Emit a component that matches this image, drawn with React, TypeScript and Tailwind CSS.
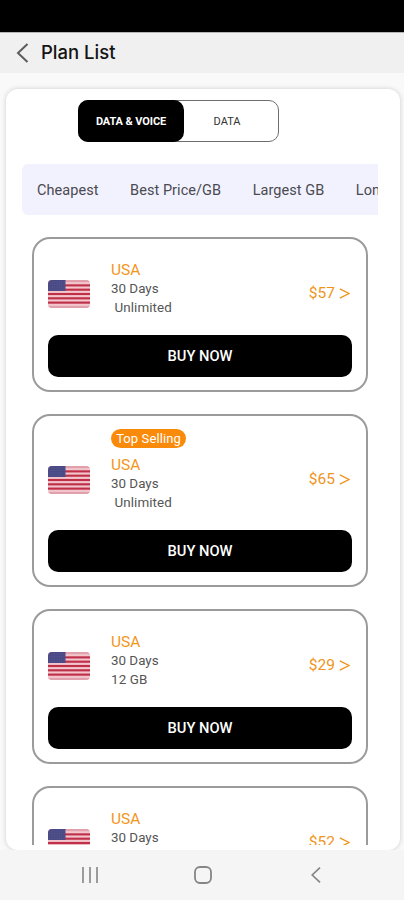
import React from 'react'

type Plan = {
  id: number
  country: string
  days: string
  amount: string
  price: string
  top?: boolean
}

const FILTERS = ['Cheapest', 'Best Price/GB', 'Largest GB', 'Longest']

const PLANS: Plan[] = [
  { id: 1, country: 'USA', days: '30 Days', amount: '\u00a0Unlimited', price: '$57' },
  { id: 2, country: 'USA', days: '30 Days', amount: '\u00a0Unlimited', price: '$65', top: true },
  { id: 3, country: 'USA', days: '30 Days', amount: '12 GB', price: '$29' },
  { id: 4, country: 'USA', days: '30 Days', amount: '20 GB', price: '$52' },
]

function Flag() {
  return (
    <svg viewBox="0 0 42 28" className="h-7 w-[42px] shrink-0 rounded-[4px]" preserveAspectRatio="none">
      <rect width="42" height="28" fill="#f3c6ce" />
      {[0, 1, 2, 3, 4, 5, 6].map((i) => (
        <rect key={i} y={i * 4.31} width="42" height="2.15" fill={i === 0 || i === 6 ? '#e0a0ac' : '#bf3048'} />
      ))}
      <rect width="17.5" height="11" fill="#4a4a86" />
      {/* stars */}
      {[2, 4.5, 7, 9.3].map((y) => (
        <path key={y} d={`M1.5 ${y}H16.5`} stroke="#66669a" strokeWidth="0.7" strokeDasharray="0.8 1.6" />
      ))}
    </svg>
  )
}

function PlanCard({ plan }: { plan: Plan }) {
  return (
    <div className="shrink-0 rounded-[18px] border-2 border-[#9b9b9b] px-3.5 pb-[13px] pt-[13px]">
      <div className={plan.top ? 'flex h-[101px] items-center' : 'flex h-[83px] items-center'}>
        <Flag />
        <div className={plan.top ? 'ml-[21px] flex-1 self-start' : 'ml-[21px] flex-1 self-start pt-[7px]'}>
          {plan.top && (
            <div className="mb-[6px] flex h-[19px] w-[75px] items-center justify-center rounded-full bg-[#fa8a0a] pt-px text-[13px] tracking-[0.1px] text-white">
              Top Selling
            </div>
          )}
          <div className="pt-px text-[15.5px] leading-5 text-[#f3961c]">{plan.country}</div>
          <div className="text-[13.4px] leading-[18.5px] text-[#555]">{plan.days}</div>
          <div className="text-[13.4px] leading-[18.5px] tracking-[0.1px] text-[#555]">{plan.amount}</div>
        </div>
        <div className="flex items-center gap-1 pr-0.5 text-[15.5px] text-[#f0941c]">
          {plan.price}
          <svg width="11" height="11" viewBox="0 0 11 11" fill="none" stroke="currentColor" strokeWidth="1.4">
            <path d="M0.8 0.8L10 5.5L0.8 10.2" />
          </svg>
        </div>
      </div>
      <button className="h-[42px] w-full rounded-[10px] bg-black text-[14.7px] font-medium text-white">
        BUY NOW
      </button>
    </div>
  )
}

export default function App() {
  const [mode, setMode] = React.useState('voice')

  return (
    <div className="flex h-[900px] w-[404px] flex-col overflow-hidden bg-[#f9f9f9] font-[Roboto,sans-serif]">
      <div className="h-8 shrink-0 bg-black" />

      <header className="flex h-[41px] shrink-0 items-center border-t border-[#b5b5b5] bg-[#f0f0f0] pl-4">
        <svg width="13" height="20" viewBox="0 0 13 20" fill="none" stroke="#5c5c5c" strokeWidth="2">
          <path d="M11.5 1L2 10L11.5 19" />
        </svg>
        <h1 className="-mt-[3px] ml-3 font-[Inter,sans-serif] text-[18.5px] font-medium leading-6 text-[#141414]">
          Plan List
        </h1>
      </header>

      <main className="ml-1.5 mr-1 mt-4 flex h-[761px] shrink-0 flex-col overflow-hidden rounded-xl bg-white px-4 pb-[5px] shadow-[0_0_5px_rgba(0,0,0,0.18)]">
        {/* plan type switch */}
        <div className="ml-14 mt-[11px] flex h-[42px] w-[201px] shrink-0 rounded-[10px] border border-[#6e6e6e] text-[11px]">
          <button
            className="-my-px -ml-px w-[106px] rounded-[10px] bg-black pt-[3px] font-bold tracking-[-0.1px] text-white"
            onClick={() => setMode('voice')}
            aria-pressed={mode === 'voice'}
          >
            DATA &amp; VOICE
          </button>
          <button className="w-[86px] pt-[3px] text-[#333]" onClick={() => setMode('data')} aria-pressed={mode === 'data'}>
            DATA
          </button>
        </div>

        <nav className="mt-[22px] flex h-[51px] w-[356px] shrink-0 items-center gap-[31.5px] overflow-hidden rounded-l-md bg-[#f2f2ff] pl-[15px] pt-[2px] text-[14.5px] tracking-[0.06px] text-[#4a4a50]">
          {FILTERS.map((f) => (
            <span key={f} className="shrink-0">{f}</span>
          ))}
        </nav>

        <div className="mt-[22px] flex min-h-0 w-[357px] flex-1 flex-col gap-[22px] overflow-hidden pl-2.5 pr-[11px]">
          {PLANS.map((p) => (
            <PlanCard key={p.id} plan={p} />
          ))}
        </div>
      </main>

      <footer className="flex flex-1 items-center bg-[#f5f5f5]">
        <svg className="ml-[82px]" width="16" height="16" viewBox="0 0 16 16" stroke="#858585" strokeWidth="1.6">
          <path d="M1 0V16M8 0V16M15 0V16" />
        </svg>
        <svg className="ml-24" width="18" height="18" viewBox="0 0 18 18" fill="none" stroke="#858585" strokeWidth="1.8">
          <rect x="1" y="1" width="16" height="16" rx="5" />
        </svg>
        <svg className="ml-[99px]" width="10" height="16" viewBox="0 0 10 16" fill="none" stroke="#858585" strokeWidth="1.7">
          <path d="M9 0.7L1.2 8L9 15.3" />
        </svg>
      </footer>
    </div>
  )
}
